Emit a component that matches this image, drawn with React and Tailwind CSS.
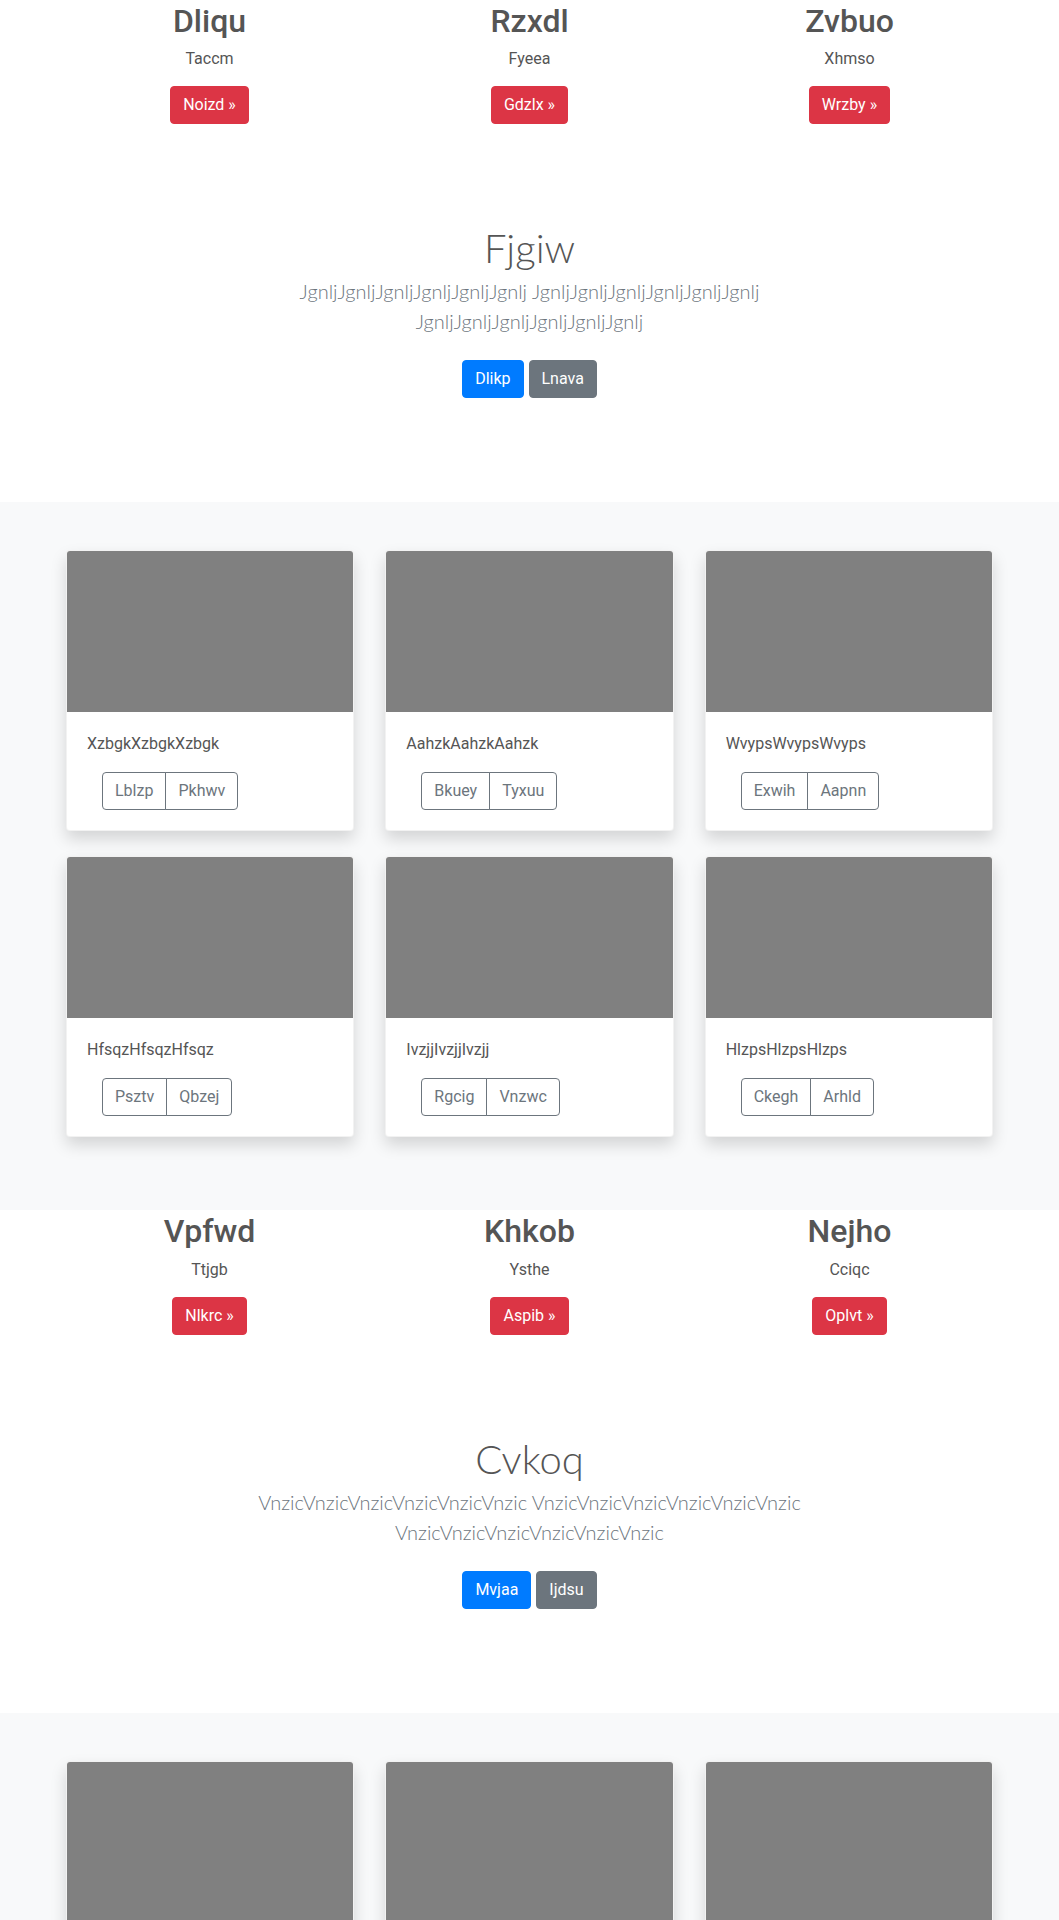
import React from 'react';

const font = { fontFamily: 'Roboto, "Noto Sans", Arial, sans-serif' };
const light = { fontFamily: 'Lato, Roboto, Arial, sans-serif' };

const periods = [
  {
    features: [
      { title: 'Dliqu', text: 'Taccm', action: 'Noizd' },
      { title: 'Rzxdl', text: 'Fyeea', action: 'Gdzlx' },
      { title: 'Zvbuo', text: 'Xhmso', action: 'Wrzby' },
    ],
    hero: { title: 'Fjgiw', word: 'Jgnlj', primary: 'Dlikp', secondary: 'Lnava' },
    cards: [
      { title: 'Xzbgk', buttons: ['Lblzp', 'Pkhwv'] },
      { title: 'Aahzk', buttons: ['Bkuey', 'Tyxuu'] },
      { title: 'Wvyps', buttons: ['Exwih', 'Aapnn'] },
      { title: 'Hfsqz', buttons: ['Psztv', 'Qbzej'] },
      { title: 'Ivzjj', buttons: ['Rgcig', 'Vnzwc'] },
      { title: 'Hlzps', buttons: ['Ckegh', 'Arhld'] },
    ],
  },
  {
    features: [
      { title: 'Vpfwd', text: 'Ttjgb', action: 'Nlkrc' },
      { title: 'Khkob', text: 'Ysthe', action: 'Aspib' },
      { title: 'Nejho', text: 'Cciqc', action: 'Oplvt' },
    ],
    hero: { title: 'Cvkoq', word: 'Vnzic', primary: 'Mvjaa', secondary: 'Ijdsu' },
    cards: [
      { title: 'Qmrtd', buttons: ['Hwzel', 'Sokpa'] },
      { title: 'Byfun', buttons: ['Ruxti', 'Gamlo'] },
      { title: 'Tcesk', buttons: ['Powvy', 'Lidna'] },
      { title: 'Mugro', buttons: ['Fenkb', 'Zutaq'] },
      { title: 'Dalve', buttons: ['Kipsu', 'Oremn'] },
      { title: 'Yenfo', buttons: ['Wacbi', 'Tulsh'] },
    ],
  },
];

const Features = ({ items }) => (
  <div className="w-[960px] mx-auto grid grid-cols-3 text-center">
    {items.map((f) => (
      <div key={f.title} className="px-[15px]">
        <h2 className="text-[32px] leading-[38.4px] font-medium text-[#555] pt-[2px] mb-[6px]">{f.title}</h2>
        <p className="text-base leading-6 text-[#555] pt-px mb-[15px]">{f.text}</p>
        <p className="mb-4">
          <button className="bg-[#dc3545] text-white text-base leading-6 px-3 py-[6px] rounded border border-[#dc3545]">
            {f.action} »
          </button>
        </p>
      </div>
    ))}
  </div>
);

const Hero = ({ hero }) => {
  const group = hero.word.repeat(6);
  return (
    <section className="pt-[80px] pb-24 text-center">
      <div className="w-[610px] mx-auto">
        <h1 className="text-[40px] leading-[48px] font-light text-[#555] pt-[4px] mb-[4px]" style={light}>
          {hero.title}
        </h1>
        <p className="text-xl leading-[30px] font-light text-[#6c757d] mb-4" style={light}>
          {group} {group} {group}
        </p>
        <p className="flex justify-center gap-[5px]">
          <button className="my-2 bg-[#007bff] text-white text-base leading-6 px-3 py-[6px] rounded border border-[#007bff]">
            {hero.primary}
          </button>
          <button className="my-2 bg-[#6c757d] text-white text-base leading-6 px-3 py-[6px] rounded border border-[#6c757d]">
            {hero.secondary}
          </button>
        </p>
      </div>
    </section>
  );
};

const Card = ({ card }) => (
  <div className="bg-white rounded overflow-hidden border border-black/5 shadow-[0_8px_16px_rgba(0,0,0,0.15)]">
    <div className="h-[161px] bg-[#808080]" />
    <div className="p-5">
      <p className="text-base leading-6 text-[#555] mb-4">{card.title.repeat(3)}</p>
      <div className="flex ml-[15px]">
        <button className="text-base leading-6 text-[#6c757d] px-3 py-[6px] border border-[#6c757d] rounded-l">
          {card.buttons[0]}
        </button>
        <button className="-ml-px text-base leading-6 text-[#6c757d] px-3 py-[6px] border border-[#6c757d] rounded-r">
          {card.buttons[1]}
        </button>
      </div>
    </div>
  </div>
);

const Album = ({ cards }) => (
  <div className="bg-[#f8f9fa] py-12">
    <div className="w-[927px] mx-auto grid grid-cols-3 gap-x-[31px] gap-y-[25px] pb-[25px]">
      {cards.map((c) => (
        <Card key={c.title} card={c} />
      ))}
    </div>
  </div>
);

export default function App() {
  return (
    <div className="bg-white min-h-[1920px]" style={font}>
      {periods.map((p, i) => (
        <div key={i}>
          <Features items={p.features} />
          <Hero hero={p.hero} />
          <Album cards={p.cards} />
        </div>
      ))}
    </div>
  );
}
